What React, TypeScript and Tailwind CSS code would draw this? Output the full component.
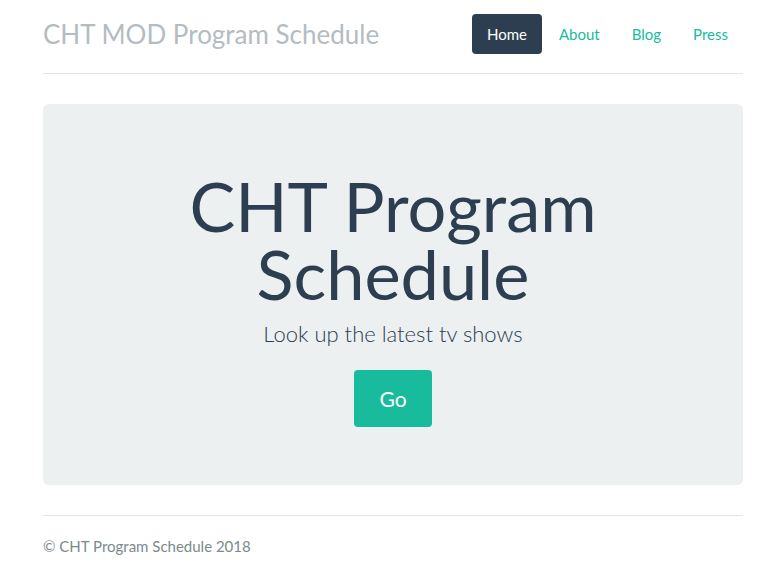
const navItems = ['Home', 'About', 'Blog', 'Press'];

export default function App() {
  return (
    <div className="min-h-screen bg-white font-['Lato',sans-serif] text-[15px] text-[#2c3e50]">
      <div className="ml-[43px] w-[700px]">
        <header className="flex items-center justify-between border-b border-[#e5e5e5] pt-[14px] pb-[19px]">
          <h3 className="text-[26px] leading-[40px] text-[#b4bcc2]">CHT MOD Program Schedule</h3>
          <nav className="flex gap-[2px]">
            {navItems.map((item, i) => (
              <a
                key={item}
                href="#"
                className={
                  i === 0
                    ? 'rounded-[4px] bg-[#2c3e50] px-[15px] leading-[40px] text-white'
                    : 'rounded-[4px] px-[15px] leading-[40px] text-[#18bc9c]'
                }
              >
                {item}
              </a>
            ))}
          </nav>
        </header>

        <section className="mt-[30px] flex flex-col items-center rounded-[6px] bg-[#ecf0f1] pt-[48px] pb-[58px] text-center">
          <h1 className="mt-[20px] mb-[10px] text-[68.5px] leading-[68px]">
            CHT Program
            <br />
            Schedule
          </h1>
          <p className="mb-[21px] text-[22px] leading-[31px] font-light">Look up the latest tv shows</p>
          <a
            href="#"
            className="flex h-[57px] w-[78px] items-center justify-center rounded-[4px] bg-[#18bc9c] text-[21px] text-white"
          >
            Go
          </a>
        </section>

        <footer className="mt-[30px] border-t border-[#e5e5e5] pt-[20px] text-[#7b8a8b]">
          <p className="leading-[21px]">© CHT Program Schedule 2018</p>
        </footer>
      </div>
    </div>
  );
}
